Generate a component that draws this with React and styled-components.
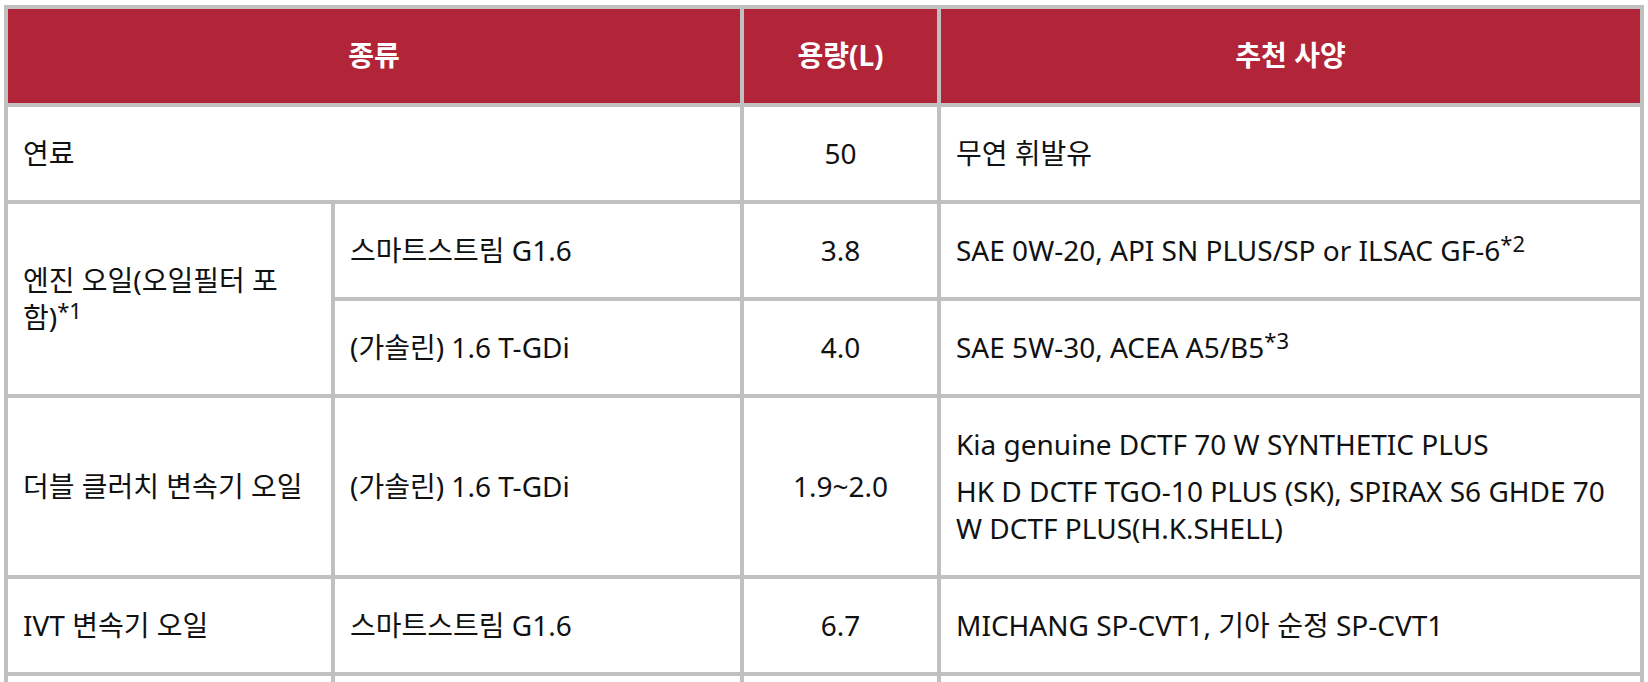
import styled, { createGlobalStyle } from 'styled-components';

const GlobalStyle = createGlobalStyle`
  html, body {
    margin: 0;
    padding: 0;
    background: #ffffff;
  }
  body {
    font-family: "Noto Sans", "Noto Sans CJK KR", sans-serif;
    color: #111111;
  }
`;

const Table = styled.div`
  display: grid;
  grid-template-columns: 323px 405px 193px 1fr;
  gap: 4px;
  width: 1640px;
  box-sizing: border-box;
  margin: 5px 4px 0 4px;
  padding: 4px;
  background: #c0c0c0;
`;

const Cell = styled.div`
  display: flex;
  flex-direction: column;
  justify-content: center;
  align-items: ${({ $center }) => ($center ? 'center' : 'flex-start')};
  text-align: ${({ $center }) => ($center ? 'center' : 'left')};
  grid-column: ${({ $span }) => ($span ? `span ${$span}` : 'auto')};
  grid-row: ${({ $rows }) => ($rows ? `span ${$rows}` : 'auto')};
  padding: 28px 15px;
  min-height: 37px;
  background: #ffffff;
  font-size: 28px;
  line-height: 37px;
  color: #111111;
`;

const HeadCell = styled(Cell)`
  align-items: center;
  text-align: center;
  padding: 28px 15px 29px;
  background: #b22539;
  color: #ffffff;
  font-weight: 700;
`;

const Line = styled.p`
  margin: 0;
  & + & {
    margin-top: 10px;
  }
`;

const Note = styled.sup`
  font-size: 22px;
  line-height: 0;
  vertical-align: 9px;
`;

const rows = [
  { kind: '연료', span: 2, amount: '50', spec: ['무연 휘발유'] },
];

export default function App() {
  return (
    <>
      <GlobalStyle />
      <Table>
        <HeadCell $span={2}>종류</HeadCell>
        <HeadCell>용량(L)</HeadCell>
        <HeadCell>추천 사양</HeadCell>

        {rows.map((row) => (
          <>
            <Cell key={row.kind} $span={row.span}>{row.kind}</Cell>
            <Cell $center>{row.amount}</Cell>
            <Cell>
              {row.spec.map((s) => (
                <Line key={s}>{s}</Line>
              ))}
            </Cell>
          </>
        ))}

        <Cell $rows={2}>
          <Line>
            엔진 오일(오일필터 포함)<Note>*1</Note>
          </Line>
        </Cell>
        <Cell>스마트스트림 G1.6</Cell>
        <Cell $center>3.8</Cell>
        <Cell>
          <Line>
            SAE 0W-20, API SN PLUS/SP or ILSAC GF-6<Note>*2</Note>
          </Line>
        </Cell>
        <Cell>(가솔린) 1.6 T-GDi</Cell>
        <Cell $center>4.0</Cell>
        <Cell>
          <Line>
            SAE 5W-30, ACEA A5/B5<Note>*3</Note>
          </Line>
        </Cell>

        <Cell>더블 클러치 변속기 오일</Cell>
        <Cell>(가솔린) 1.6 T-GDi</Cell>
        <Cell $center>1.9~2.0</Cell>
        <Cell>
          <Line>Kia genuine DCTF 70 W SYNTHETIC PLUS</Line>
          <Line>HK D DCTF TGO-10 PLUS (SK), SPIRAX S6 GHDE 70 W DCTF PLUS(H.K.SHELL)</Line>
        </Cell>

        <Cell>IVT 변속기 오일</Cell>
        <Cell>스마트스트림 G1.6</Cell>
        <Cell $center>6.7</Cell>
        <Cell>
          <Line>MICHANG SP-CVT1, 기아 순정 SP-CVT1</Line>
        </Cell>

        <Cell />
        <Cell />
        <Cell />
        <Cell />
      </Table>
    </>
  );
}
